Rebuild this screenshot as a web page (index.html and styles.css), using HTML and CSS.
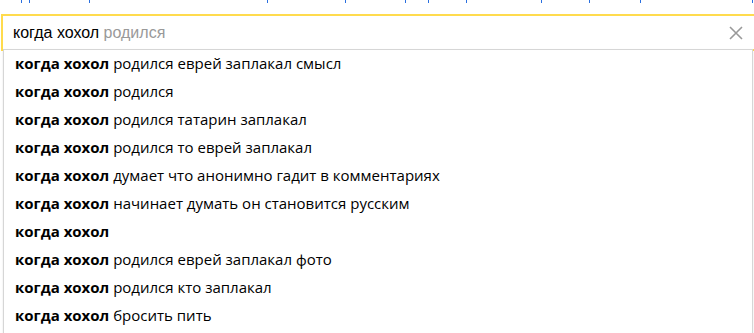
FILE: index.html
```html
<!DOCTYPE html>
<html lang="ru">
<head>
<meta charset="utf-8">
<link rel="stylesheet" href="styles.css">
</head>
<body>
<div class="page">
  <svg class="links" width="754" height="3" viewBox="0 0 754 3" aria-hidden="true">
    <g fill="#2a6fe0">
      <rect x="21" y="0" width="1" height="3"/><rect x="29" y="0" width="1" height="3"/>
      <rect x="89" y="0" width="1" height="3"/><rect x="267" y="0" width="1" height="3"/>
      <rect x="345" y="0" width="1" height="3"/><rect x="405" y="0" width="1" height="3"/>
      <rect x="428" y="0" width="1" height="3"/><rect x="466" y="0" width="1" height="3"/>
      <rect x="541" y="0" width="1" height="3"/><rect x="589" y="0" width="1" height="3"/>
      <rect x="640" y="0" width="1" height="3"/><rect x="752" y="0" width="1" height="3"/>
    </g>
  </svg>
  <div class="search">
    <div class="input"><span class="typed">когда хохол</span> <span class="hint">родился</span></div>
    <svg class="clear" width="14" height="14" viewBox="0 0 14 14"><path d="M1 1 L13 13 M13 1 L1 13" stroke="#999" stroke-width="1.6" fill="none"/></svg>
  </div>
  <ul class="suggest">
    <li><b>когда хохол</b> родился еврей заплакал смысл</li>
    <li><b>когда хохол</b> родился</li>
    <li><b>когда хохол</b> родился татарин заплакал</li>
    <li><b>когда хохол</b> родился то еврей заплакал</li>
    <li><b>когда хохол</b> думает что анонимно гадит в комментариях</li>
    <li><b>когда хохол</b> начинает думать он становится русским</li>
    <li><b>когда хохол</b></li>
    <li><b>когда хохол</b> родился еврей заплакал фото</li>
    <li><b>когда хохол</b> родился кто заплакал</li>
    <li><b>когда хохол</b> бросить пить</li>
  </ul>
</div>
</body>
</html>
```
FILE: styles.css
```css
* { box-sizing: border-box; }
html, body { margin: 0; padding: 0; background: #fff; }
body { width: 754px; height: 333px; overflow: hidden; }
.page { position: relative; height: 333px; font-family: "Liberation Sans", Arial, sans-serif; }
.links { display: block; margin-bottom: 11px; }
.search {
  margin-left: 1px;
  width: 755px;
  height: 37px;
  border: 2px solid #ffdb4d;
  display: flex;
  align-items: center;
  padding-left: 10px;
}
.input { flex: 1; font-size: 16px; color: #000; white-space: nowrap; padding-top: 1px; }
.hint { color: #999; }
.clear { margin-right: 11px; }
.suggest {
  position: absolute;
  top: 49px;
  left: 3px;
  width: 750px;
  height: 290px;
  margin: 0;
  padding: 0;
  list-style: none;
  background: #fff;
  border: 1px solid #d6d6d6;
  box-shadow: 0 1px 2px rgba(0,0,0,0.1);
}
.suggest li {
  height: 28px;
  line-height: 27px;
  padding-left: 11px;
  font-family: "Open Sans", "Noto Sans", sans-serif;
  font-size: 15px;
  color: #000;
  white-space: nowrap;
}
.suggest b { font-weight: 700; }
```
